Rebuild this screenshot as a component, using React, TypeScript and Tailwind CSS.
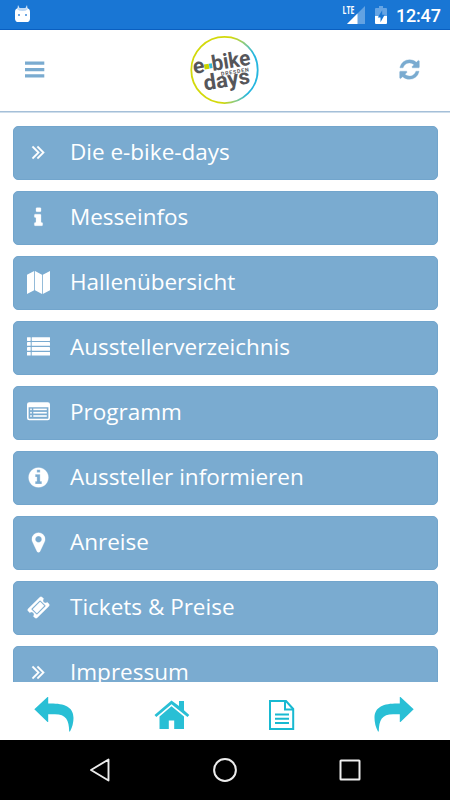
import type { ReactNode } from "react";

const GLYPHS = {
  angles:
    "M979 896q0 13-10 23l-466 466q-10 10-23 10t-23-10l-50-50q-10-10-10-23t10-23l393-393-393-393q-10-10-10-23t10-23l50-50q10-10 23-10t23 10l466 466q10 10 10 23zm384 0q0 13-10 23l-466 466q-10 10-23 10t-23-10l-50-50q-10-10-10-23t10-23l393-393-393-393q-10-10-10-23t10-23l50-50q10-10 23-10t23 10l466 466q10 10 10 23z",
  info: "M1216 1344v128q0 26-19 45t-45 19h-512q-26 0-45-19t-19-45v-128q0-26 19-45t45-19h64v-384h-64q-26 0-45-19t-19-45v-128q0-26 19-45t45-19h384q26 0 45 19t19 45v576h64q26 0 45 19t19 45zm-128-1152v192q0 26-19 45t-45 19h-256q-26 0-45-19t-19-45v-192q0-26 19-45t45-19h256q26 0 45 19t19 45z",
  infoCircle:
    "M1152 1376v-160q0-14-9-23t-23-9h-96v-512q0-14-9-23t-23-9h-320q-14 0-23 9t-9 23v160q0 14 9 23t23 9h96v320h-96q-14 0-23 9t-9 23v160q0 14 9 23t23 9h448q14 0 23-9t9-23zm-128-896v-160q0-14-9-23t-23-9h-192q-14 0-23 9t-9 23v160q0 14 9 23t23 9h192q14 0 23-9t9-23zm640 416q0 209-103 385.5t-279.5 279.5-385.5 103-385.5-103-279.5-279.5-103-385.5 103-385.5 279.5-279.5 385.5-103 385.5 103 279.5 279.5 103 385.5z",
  marker:
    "M1152 640q0-106-75-181t-181-75-181 75-75 181 75 181 181 75 181-75 75-181zm256 0q0 109-33 179l-364 774q-16 33-47.5 52t-67.5 19-67.5-19-46.5-52l-365-774q-33-70-33-179 0-212 150-362t362-150 362 150 150 362z",
  ticket:
    "M1024 452l316 316-572 572-316-316zm-211 979l618-618q19-19 19-45t-19-45l-362-362q-18-18-45-18t-45 18l-618 618q-19 19-19 45t19 45l362 362q18 18 45 18t45-18zm889-637l-907 908q-37 37-90.5 37t-90.5-37l-126-126q56-56 56-136t-56-136-136-56-136 56l-125-126q-37-37-37-90.5t37-90.5l907-906q37-37 90.5-37t90.5 37l125 125q-56 56-56 136t56 136 136 56 136-56l126 125q37 37 37 90.5t-37 90.5z",
  refresh:
    "M1639 1056q0 5-1 7-64 268-268 434.5t-478 166.5q-146 0-282.5-55t-243.5-157l-129 129q-19 19-45 19t-45-19-19-45v-448q0-26 19-45t45-19h448q26 0 45 19t19 45-19 45l-137 137q71 66 161 102t187 36q134 0 250-65t186-179q11-17 53-117 8-23 30-23h192q13 0 22.5 9.5t9.5 22.5zm25-800v448q0 26-19 45t-45 19h-448q-26 0-45-19t-19-45 19-45l138-138q-148-137-349-137-134 0-250 65t-186 179q-11 17-53 117-8 23-30 23h-199q-13 0-22.5-9.5t-9.5-22.5v-7q65-268 270-434.5t480-166.5q146 0 284 55.5t245 156.5l130-129q19-19 45-19t45 19 19 45z",
};

function Glyph({ d }: { d: string }) {
  return (
    <svg viewBox="0 0 1792 1792" className="size-[23px] fill-current stroke-current" strokeWidth="24">
      <path d={d} />
    </svg>
  );
}

function MapIcon() {
  return (
    <svg viewBox="0 0 23 23" className="size-[23px] fill-current">
      <path d="M0 3.8 7.2 0v19.2L0 23zM8 0l7 3.8V23l-7-3.8zM15.8 3.8 23 0v19.2L15.8 23z" />
    </svg>
  );
}

function ListIcon() {
  return (
    <svg viewBox="0 0 23 23" className="size-[23px] fill-current">
      {[1.2, 6.1, 11, 15.9].map((y) => (
        <g key={y}>
          <rect x="0" y={y} width="3.7" height="3.7" rx="0.4" />
          <rect x="4.7" y={y} width="18.3" height="3.7" rx="0.4" />
        </g>
      ))}
    </svg>
  );
}

function ListAltIcon() {
  return (
    <svg viewBox="0 0 23 23" className="size-[23px] fill-current">
      <path
        fillRule="evenodd"
        d="M2.2 1.3h18.6Q23 1.3 23 3.5v13.6q0 2.2-2.2 2.2H2.2Q0 19.3 0 17.1V3.5Q0 1.3 2.2 1.3zM1.6 6.3v10.8q0 .7.7.7h18.4q.7 0 .7-.7V6.3z"
      />
      {[7.6, 10.9, 14.2].map((y) => (
        <g key={y}>
          <rect x="3.2" y={y} width="1.6" height="1.6" />
          <rect x="6.3" y={y} width="13.5" height="1.6" />
        </g>
      ))}
    </svg>
  );
}

const ITEMS: { label: string; icon: ReactNode }[] = [
  { label: "Die e-bike-days", icon: <Glyph d={GLYPHS.angles} /> },
  { label: "Messeinfos", icon: <Glyph d={GLYPHS.info} /> },
  { label: "Hallenübersicht", icon: <MapIcon /> },
  { label: "Ausstellerverzeichnis", icon: <ListIcon /> },
  { label: "Programm", icon: <ListAltIcon /> },
  { label: "Aussteller informieren", icon: <Glyph d={GLYPHS.infoCircle} /> },
  { label: "Anreise", icon: <Glyph d={GLYPHS.marker} /> },
  { label: "Tickets & Preise", icon: <Glyph d={GLYPHS.ticket} /> },
  { label: "Impressum", icon: <Glyph d={GLYPHS.angles} /> },
];

function StatusBar() {
  return (
    <div className="flex h-[30px] shrink-0 items-start border-b border-[#0a5fc0] bg-[#1976d4] pl-[15px] pr-[10px] text-white">
      <svg viewBox="0 0 15 18" className="mt-[5px] h-[18px] w-[15px]">
        <path d="M3 0l2 4h5l2-4 .7 4.4H2.3z" fill="#d4e5f8" />
        <rect x="0" y="3.2" width="15" height="13.8" rx="3.6" fill="#fff" />
        <path d="M2.5 3.2h10v1.3q-1.5 1.5-5 1.5t-5-1.5z" fill="#bdd7f3" />
        <path d="M3 9h2v2H3zM10 9h2v2h-2z" fill="#6ea7e3" />
      </svg>
      <div className="ml-auto flex items-start">
        <svg viewBox="0 0 24 20" className="mt-[5px] h-5 w-6 overflow-visible">
          <path d="M12.5 11.5 23 1v18H5z" fill="#fff" fillOpacity="0.32" />
          <path d="M5 19 15.5 8.5V19z" fill="#fff" />
          <rect x="0" y="0" width="12.5" height="10" fill="#1976d4" />
          <text x="0.5" y="9" fontSize="10.4" fontWeight="700" textLength="11.8" lengthAdjust="spacingAndGlyphs" fill="#fff" className="font-['Open_Sans',sans-serif]">
            LTE
          </text>
        </svg>
        <svg viewBox="0 0 12 18" className="ml-[9px] mt-[6px] h-[18px] w-3">
          <path d="M4 0h4v2h3q1 0 1 1v7H0V3q0-1 1-1h3z" fill="#65a4e4" />
          <path d="M0 10h12v7q0 1-1 1H1q-1 0-1-1z" fill="#fff" />
          <path d="M7.2 4.2 2.8 11.5h2.7v4.7l4.2-7.4H7.2z" fill="#1976d4" />
        </svg>
        <span className="ml-[9px] mt-[5px] w-[44px] whitespace-nowrap font-['Roboto',sans-serif] text-[18px] font-medium leading-[21px] tracking-[-0.2px]">12:47</span>
      </div>
    </div>
  );
}

function Logo() {
  return (
    <svg viewBox="0 0 70 70" className="size-[70px]">
      <defs>
        <linearGradient id="ring" x1="0" x2="1" y1="0" y2="0.15">
          <stop offset="0.6" stopColor="#d3d90b" />
          <stop offset="0.82" stopColor="#7fc890" />
          <stop offset="0.95" stopColor="#25b6df" />
        </linearGradient>
      </defs>
      <circle cx="34.5" cy="35" r="33.2" fill="#fff" stroke="url(#ring)" strokeWidth="1.8" />
      <g className="font-['Roboto',sans-serif] font-bold" fill="#56565a">
        <g transform="translate(4 39) rotate(-9.3)">
          <text x="0" y="0" fontSize="21.5" textLength="11.5" lengthAdjust="spacingAndGlyphs">e</text>
          <text x="19" y="0" fontSize="21.5" textLength="39" lengthAdjust="spacingAndGlyphs">bike</text>
          <rect x="11.3" y="-7.8" width="4.8" height="5" fill="#c9d400" />
          <rect x="16.3" y="-7.8" width="3" height="5" fill="#36b9dc" />
        </g>
        <text transform="translate(31.2 40.8) rotate(-9)" fontSize="5.3" textLength="28" lengthAdjust="spacing">DRESDEN</text>
        <text transform="translate(14.7 55.4) rotate(-9)" fontSize="21.5" textLength="46.5" lengthAdjust="spacingAndGlyphs">days</text>
      </g>
    </svg>
  );
}

function Header() {
  return (
    <header className="flex h-[82px] shrink-0 items-center justify-between border-b border-[#a5bfd8] bg-white pb-[1px] pl-[25px] pr-[29px] text-[#7aabd0] shadow-[0_1px_0_#cfdeeb]">
      <svg viewBox="0 0 20 18" className="h-[18px] w-5 fill-current">
        <path d="M0 .5h19.3v3.2H0zM0 7h19.3v3.2H0zM0 13.2h19.3v3.2H0z" />
      </svg>
      <div className="ml-[6px]">
        <Logo />
      </div>
      <div className="pb-[1px]">
        <Glyph d={GLYPHS.refresh} />
      </div>
    </header>
  );
}

function BottomBar() {
  return (
    <nav className="flex h-[58px] shrink-0 items-start justify-between bg-white pl-[34px] pr-[36px] pt-[14px] text-[#29bfd5]">
      <svg viewBox="0 0 40 36" className="h-9 w-10 fill-current">
        <path d="M.3 13.2 13.5 1h.7v6.6C29 7.2 39.5 10 39.5 22q0 7-3.5 13.5h-.8C35 24 32 18.3 21 18.3h-6.8V26h-.7z" />
      </svg>
      <svg viewBox="0 0 36 30" className="ml-[2px] mt-[4px] h-[30px] w-9 fill-current">
        <path d="M17.5 0.5 0.5 15l1.8 2L17.5 4.3 33.5 17l1.8-2-5.3-4.7V1h-5v5z" />
        <path d="M17.5 6.3 5.5 16.4V29h9.3v-8.5h5.4V29H30V16.4z" />
      </svg>
      <svg viewBox="0 0 28 32" className="ml-[1px] mt-[3px] h-8 w-7">
        <path d="M2 2h16l7.2 8v20H2z" fill="none" stroke="#18b9d1" strokeWidth="2" />
        <path d="M17 2v8.6h8" fill="none" stroke="#18b9d1" strokeWidth="2" />
        <path d="M7 15.5h14M7 19.8h14M7 24h14" stroke="#18b9d1" strokeWidth="1.9" />
      </svg>
      <svg viewBox="0 0 40 36" className="h-9 w-10 -scale-x-100 fill-current">
        <path d="M.3 13.2 13.5 1h.7v6.6C29 7.2 39.5 10 39.5 22q0 7-3.5 13.5h-.8C35 24 32 18.3 21 18.3h-6.8V26h-.7z" />
      </svg>
    </nav>
  );
}

function SystemNav() {
  return (
    <div className="flex h-[60px] shrink-0 items-center justify-between bg-black px-[89px]">
      <svg viewBox="0 0 22 24" className="h-6 w-[22px]" fill="none" stroke="#ececec" strokeWidth="1.9" strokeLinejoin="round">
        <path d="M2 12 19.5 1.5v21z" />
      </svg>
      <svg viewBox="0 0 26 26" className="size-[26px]" fill="none" stroke="#ececec" strokeWidth="2">
        <circle cx="13" cy="13" r="10.9" />
      </svg>
      <svg viewBox="0 0 22 22" className="size-[22px]" fill="none" stroke="#ececec" strokeWidth="2">
        <rect x="1.5" y="1.5" width="19" height="19" rx="0.5" />
      </svg>
    </div>
  );
}

export default function App() {
  return (
    <div className="flex h-[800px] w-[450px] flex-col overflow-hidden bg-white">
      <StatusBar />
      <Header />
      <main className="flex min-h-0 flex-1 flex-col gap-[11px] overflow-hidden px-[12.5px] pt-[14px]">
        {ITEMS.map((item) => (
          <button
            key={item.label}
            type="button"
            className="flex h-[54px] w-full shrink-0 items-center rounded-[5px] border border-[#72a5cc] bg-[#7aabd0] pl-[13px] text-left text-white"
          >
            <span className="flex w-[23px] shrink-0 justify-center pb-[2px]">{item.icon}</span>
            <span className="ml-[20.5px] whitespace-nowrap pb-[2px] font-['Open_Sans',sans-serif] text-[22.5px] leading-[30px]">{item.label}</span>
          </button>
        ))}
      </main>
      <BottomBar />
      <SystemNav />
    </div>
  );
}
